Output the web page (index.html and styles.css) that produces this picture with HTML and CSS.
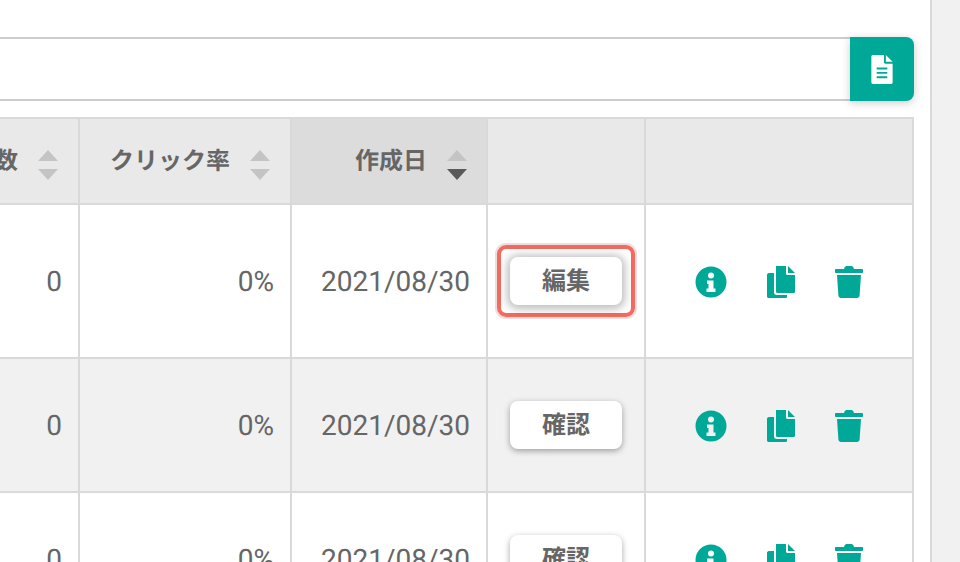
FILE: index.html
```html
<!DOCTYPE html>
<html lang="ja">
<head>
<meta charset="utf-8">
<title>一覧</title>
<link rel="stylesheet" href="styles.css">
</head>
<body>
<svg class="defs" width="0" height="0" aria-hidden="true">
  <symbol id="i-info" viewBox="0 0 32 32"><path fill-rule="evenodd" d="M16 .5a15.500 15.500 0 1 0 0 31 15.500 15.500 0 0 0 0-31ZM16 6.500a3 3 0 1 1 0 6 3 3 0 0 1 0-6ZM12 14.500h6.500v8H20.500v3.500h-9v-3.500h2v-4.500H12Z"/></symbol>
  <symbol id="i-copy" viewBox="0 0 30 32"><path d="M10 0h10v7.500c0 .8.700 1.500 1.500 1.500H29v16.500c0 1-.8 1.500-1.500 1.500h-16c-1 0-1.500-.7-1.500-1.500ZM22 0l7 7h-7ZM8 7v19.500c0 1.400 1.100 2.500 2.500 2.500H21v1.500c0 1-.7 1.500-1.500 1.500h-17C1.500 32 1 31.200 1 30.500V9c0-1 .7-2 2-2Z"/></symbol>
  <symbol id="i-trash" viewBox="0 0 30 32"><path d="M10.500 1.500C11 .6 11.800 0 13 0h4c1.200 0 2 .6 2.500 1.500L20 3h8c.7 0 1 .5 1 1v2c0 .5-.3 1-1 1H2c-.7 0-1-.5-1-1V4c0-.5.300-1 1-1h8ZM3 9h24l-1.400 20.500c-.1 1.400-1.200 2.500-2.600 2.500H7c-1.400 0-2.500-1.100-2.600-2.500Z"/></symbol>
</svg>
<div class="page">
  <main class="panel">
    <div class="search-row">
      <div class="search-box"></div>
      <button class="doc-btn" type="button" aria-label="CSV">
        <svg class="doc-icon" viewBox="0 0 22 30"><path fill-rule="evenodd" d="M1.500 0H13v7.500c0 .8.700 1.500 1.500 1.500H22v19.500c0 .8-.7 1.500-1.500 1.500h-19C.7 30 0 29.300 0 28.500v-27C0 .7.700 0 1.500 0ZM5.500 13v2h11v-2ZM5.500 17.500v2h11v-2ZM5.500 22v2h11v-2Z"/><path d="M15 0l7 7h-7Z"/></svg>
      </button>
    </div>
    <div class="table-clip">
      <table class="list">
        <colgroup>
          <col class="c-count"><col class="c-rate"><col class="c-date"><col class="c-edit"><col class="c-tools">
        </colgroup>
        <thead>
          <tr>
            <th><span class="th-in"><span class="th-label">数</span><span class="sort"><i class="up"></i><i class="down"></i></span></span></th>
            <th><span class="th-in"><span class="th-label">クリック率</span><span class="sort"><i class="up"></i><i class="down"></i></span></span></th>
            <th class="sorted"><span class="th-in"><span class="th-label">作成日</span><span class="sort"><i class="up"></i><i class="down on"></i></span></span></th>
            <th></th>
            <th></th>
          </tr>
        </thead>
        <tbody>
          <tr class="r1">
            <td class="num">0</td><td class="num">0%</td><td class="num">2021/08/30</td>
            <td class="ctr"><span class="focus-ring"><button class="act" type="button">編集</button></span></td>
            <td><div class="tools">
              <svg class="ic ic-info"><use href="#i-info"/></svg>
              <svg class="ic ic-copy"><use href="#i-copy"/></svg>
              <svg class="ic ic-trash"><use href="#i-trash"/></svg>
            </div></td>
          </tr>
          <tr class="r2">
            <td class="num">0</td><td class="num">0%</td><td class="num">2021/08/30</td>
            <td class="ctr"><button class="act" type="button">確認</button></td>
            <td><div class="tools">
              <svg class="ic ic-info"><use href="#i-info"/></svg>
              <svg class="ic ic-copy"><use href="#i-copy"/></svg>
              <svg class="ic ic-trash"><use href="#i-trash"/></svg>
            </div></td>
          </tr>
          <tr class="r3">
            <td class="num">0</td><td class="num">0%</td><td class="num">2021/08/30</td>
            <td class="ctr"><button class="act" type="button">確認</button></td>
            <td><div class="tools">
              <svg class="ic ic-info"><use href="#i-info"/></svg>
              <svg class="ic ic-copy"><use href="#i-copy"/></svg>
              <svg class="ic ic-trash"><use href="#i-trash"/></svg>
            </div></td>
          </tr>
        </tbody>
      </table>
    </div>
  </main>
  <aside class="gutter"></aside>
</div>
</body>
</html>
```
FILE: styles.css
```css
* { box-sizing: border-box; }
html, body { margin: 0; height: 100%; overflow: hidden; }
body {
  background: #f1f1f1;
  color: #666;
  font-family: Roboto, "Noto Sans CJK JP", sans-serif;
  text-rendering: geometricPrecision;
}
.defs { position: absolute; }
.page { display: flex; width: 960px; height: 562px; overflow: hidden; }
.panel {
  width: 932px;
  flex: none;
  background: #fff;
  border-right: 2px solid #d9d9d9;
  padding: 37px 16px 0 0;
  overflow: hidden;
}
.gutter { flex: 1; background: #f1f1f1; }

.search-row { display: flex; height: 64px; }
.search-box {
  flex: 1;
  height: 64px;
  border: 2px solid #ccc;
  border-left: 0;
  border-right: 0;
  background: #fff;
}
.doc-btn {
  flex: none;
  width: 64px;
  height: 64px;
  padding: 0;
  border: 0;
  border-radius: 0 8px 8px 0;
  background: #00a898;
  box-shadow: 0 2px 8px rgba(0, 0, 0, .2);
  display: flex;
  align-items: center;
  justify-content: center;
}
.doc-icon { width: 22px; height: 29px; fill: #fff; }

.table-clip { display: flex; justify-content: flex-end; margin-top: 16px; }
.list {
  flex: none;
  table-layout: fixed;
  border-collapse: collapse;
  font-size: 28px;
}
.list th, .list td { border: 2px solid #d9d9d9; padding: 0; }
.c-count { width: 80px; }
.c-rate { width: 212px; }
.c-date { width: 196px; }
.c-edit { width: 158px; }
.c-tools { width: 268px; }

thead tr { height: 86px; }
th {
  background: #e9e9e9;
  font-family: "Noto Sans CJK JP", sans-serif;
  font-size: 24px;
  font-weight: 700;
  color: #666;
  text-align: right;
}
th.sorted { background: #dcdcdc; }
.th-in { display: flex; justify-content: flex-end; align-items: center; padding-right: 20px; gap: 20px; }
.sorted .th-in { padding-right: 19px; }
.th-label { padding-bottom: 6px; }
.sort { display: flex; flex-direction: column; gap: 8px; padding-top: 8px; }
.sort i {
  display: block;
  width: 0;
  height: 0;
  border-left: 10px solid transparent;
  border-right: 10px solid transparent;
}
.sort .up { border-bottom: 11px solid #c4c4c4; }
.sort .down { border-top: 11px solid #c4c4c4; }
.sort .down.on { border-top-color: #595959; }

tbody .r1 { height: 154px; }
tbody .r2 { height: 134px; background: #f1f1f1; }
tbody .r3 { height: 134px; }
.list .num { text-align: right; padding-right: 16px; }
.ctr { text-align: center; }
.act {
  display: inline-block;
  vertical-align: middle;
  width: 112px;
  height: 48px;
  padding: 0 0 5px;
  border: 0;
  border-radius: 8px;
  background: #fff;
  color: #666;
  font-family: "Noto Sans CJK JP", sans-serif;
  font-size: 24px;
  font-weight: 700;
  box-shadow: 0 2px 6px rgba(0, 0, 0, .35);
}
.focus-ring {
  display: inline-flex;
  padding: 8px 9px;
  border: 4px solid #f26a60;
  border-radius: 9px;
  box-shadow: 0 0 0 2px #ecdedd, inset 0 0 0 1px #fff;
  vertical-align: middle;
}
.focus-ring .act { box-shadow: 0 1px 9px 3px rgba(0, 0, 0, .26); }
.tools { display: flex; align-items: center; padding: 2px 0 0 49px; }
.ic { fill: #00a898; display: block; }
.ic-info { width: 32px; height: 32px; }
.ic-copy { width: 30px; height: 32px; margin-left: 39px; }
.ic-trash { width: 30px; height: 32px; margin-left: 38px; }
```
